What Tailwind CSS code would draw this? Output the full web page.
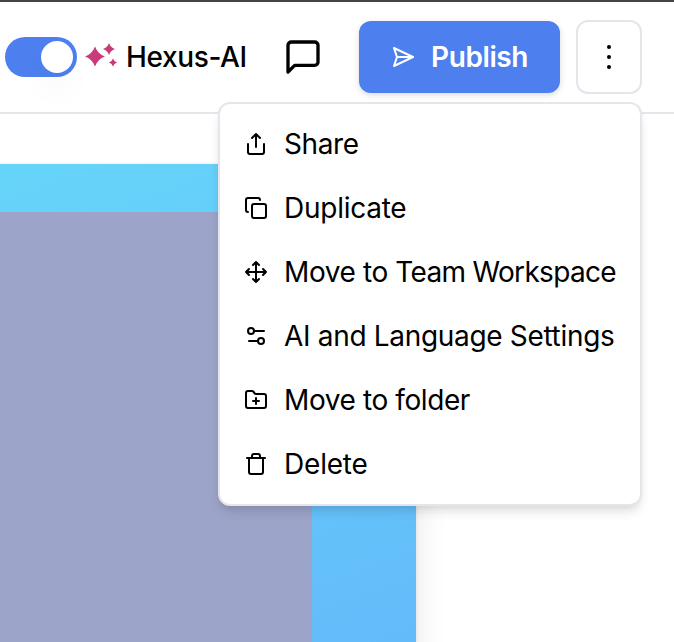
<!DOCTYPE html>
<html lang="en">
<head>
<meta charset="utf-8">
<title>Hexus-AI</title>
<script src="https://cdn.jsdelivr.net/npm/@tailwindcss/browser@4"></script>
</head>
<body class="h-[642px] w-[674px] overflow-hidden bg-white font-['Inter',sans-serif] text-[28px] text-black">
<div class="relative flex h-full flex-col">
  <header class="flex h-[114px] shrink-0 items-center border-t-2 border-b-2 border-t-[#444444] border-b-[#e5e5eb] bg-white pl-[5px]">
    <button class="flex h-10 w-[72px] items-center justify-end rounded-full bg-[#4d80ee] pr-1" aria-label="Hexus-AI">
      <span class="size-8 rounded-full bg-white shadow-[0_20px_30px_-2px_rgba(0,0,0,0.04)]"></span>
    </button>
    <svg class="mb-1 ml-2 h-6 w-8 shrink-0" viewBox="0 0 32 24" fill="#cb3a78">
      <path d="M10 3.500Q12.800 11 20 13.500Q12.800 16 10 23.500Q7.200 16 0 13.500Q7.200 11 10 3.500Z"/>
      <path d="M24 0Q25.500 4.500 30 6Q25.500 7.500 24 12Q22.500 7.500 18 6Q22.500 4.500 24 0Z"/>
      <path d="M28 15.500Q29 18.500 32 19.500Q29 20.500 28 23.500Q27 20.500 24 19.500Q27 18.500 28 15.500Z"/>
    </svg>
    <span class="ml-[9px] w-[121px] font-medium tracking-[-0.35px] whitespace-nowrap">Hexus-AI</span>
    <svg class="ml-9 size-10 shrink-0" viewBox="0 0 24 24" fill="none" stroke="currentColor" stroke-width="2" stroke-linecap="round" stroke-linejoin="round"><path d="M21 15a2 2 0 0 1-2 2H7l-4 4V5a2 2 0 0 1 2-2h14a2 2 0 0 1 2 2z"/></svg>
    <button class="ml-9 flex h-[72px] w-[201px] shrink-0 items-center rounded-xl bg-[#4d80ee] pl-8 font-semibold text-white shadow-[0_2px_6px_rgba(0,0,0,0.15)]">
      <svg class="size-6 shrink-0" viewBox="0 0 24 24" fill="none" stroke="currentColor" stroke-width="2" stroke-linecap="round" stroke-linejoin="round"><path d="m3 3 3 9-3 9 19-9Z"/><path d="M6 12h16"/></svg>
      <span class="ml-4 tracking-[-0.4px]">Publish</span>
    </button>
    <button class="ml-4 flex h-[74px] w-[66px] shrink-0 flex-col items-center justify-center gap-1.5 rounded-xl border-2 border-[#e5e5eb]" aria-label="More">
      <span class="size-1 rounded-full bg-black"></span><span class="size-1 rounded-full bg-black"></span><span class="size-1 rounded-full bg-black"></span>
    </button>
  </header>
  <main class="flex-1 overflow-hidden pt-[50px]">
    <div class="h-[600px] w-[416px] bg-linear-[160deg] from-[#66d4f9] to-[#63b6fa] pt-12 shadow-[0_0_0_2px_rgba(0,0,0,0.03),0_30px_30px_rgba(0,0,0,0.1)]">
      <div class="h-full w-[312px] bg-[#9ca4c9]"></div>
    </div>
  </main>
  <ul class="absolute top-[102px] left-[218px] flex h-[404px] w-[424px] flex-col rounded-xl border-2 border-[#e5e5eb] bg-white py-2 shadow-[0_8px_12px_-2px_rgba(0,0,0,0.1),0_4px_8px_-4px_rgba(0,0,0,0.1)]">
    <li class="flex h-16 items-center gap-4 pl-6">
      <svg class="size-6 shrink-0" viewBox="0 0 24 24" fill="none" stroke="currentColor" stroke-width="2" stroke-linecap="round" stroke-linejoin="round"><path d="M4 12v8a2 2 0 0 0 2 2h12a2 2 0 0 0 2-2v-8"/><path d="m16 6-4-4-4 4M12 2v13"/></svg>
      <span class="tracking-[-0.4px] whitespace-nowrap">Share</span>
    </li>
    <li class="flex h-16 items-center gap-4 pl-6">
      <svg class="size-6 shrink-0" viewBox="0 0 24 24" fill="none" stroke="currentColor" stroke-width="2" stroke-linecap="round" stroke-linejoin="round"><rect x="8" y="8" width="14" height="14" rx="2"/><path d="M4 16c-1.100 0-2-.9-2-2V4c0-1.100.9-2 2-2h10c1.100 0 2 .9 2 2"/></svg>
      <span class="tracking-[-0.25px] whitespace-nowrap">Duplicate</span>
    </li>
    <li class="flex h-16 items-center gap-4 pl-6">
      <svg class="size-6 shrink-0" viewBox="0 0 24 24" fill="none" stroke="currentColor" stroke-width="2" stroke-linecap="round" stroke-linejoin="round"><path d="m5 9-3 3 3 3M9 5l3-3 3 3M15 19l-3 3-3-3M19 9l3 3-3 3M2 12h20M12 2v20"/></svg>
      <span class="whitespace-nowrap"><span class="tracking-[-0.4px]">Move to </span><span class="tracking-[-0.68px]">Team Workspace</span></span>
    </li>
    <li class="flex h-16 items-center gap-4 pl-6">
      <svg class="size-6 shrink-0" viewBox="0 0 24 24" fill="none" stroke="currentColor" stroke-width="2" stroke-linecap="round" stroke-linejoin="round"><path d="M20 7h-9M14 17H5"/><circle cx="17" cy="17" r="3"/><circle cx="7" cy="7" r="3"/></svg>
      <span class="tracking-[-0.32px] whitespace-nowrap">AI and Language Settings</span>
    </li>
    <li class="flex h-16 items-center gap-4 pl-6">
      <svg class="size-6 shrink-0" viewBox="0 0 24 24" fill="none" stroke="currentColor" stroke-width="2" stroke-linecap="round" stroke-linejoin="round"><path d="M12 10v6M9 13h6"/><path d="M20 20a2 2 0 0 0 2-2V8a2 2 0 0 0-2-2h-7.900a2 2 0 0 1-1.690-.9L9.600 3.900A2 2 0 0 0 7.930 3H4a2 2 0 0 0-2 2v13a2 2 0 0 0 2 2Z"/></svg>
      <span class="tracking-[-0.4px] whitespace-nowrap">Move to folder</span>
    </li>
    <li class="flex h-16 items-center gap-4 pl-6">
      <svg class="size-6 shrink-0" viewBox="0 0 24 24" fill="none" stroke="currentColor" stroke-width="2" stroke-linecap="round" stroke-linejoin="round"><path d="M3 6h18M19 6v14c0 1-1 2-2 2H7c-1 0-2-1-2-2V6M8 6V4c0-1 1-2 2-2h4c1 0 2 1 2 2v2"/></svg>
      <span class="tracking-[-0.2px] whitespace-nowrap">Delete</span>
    </li>
  </ul>
</div>
</body>
</html>
